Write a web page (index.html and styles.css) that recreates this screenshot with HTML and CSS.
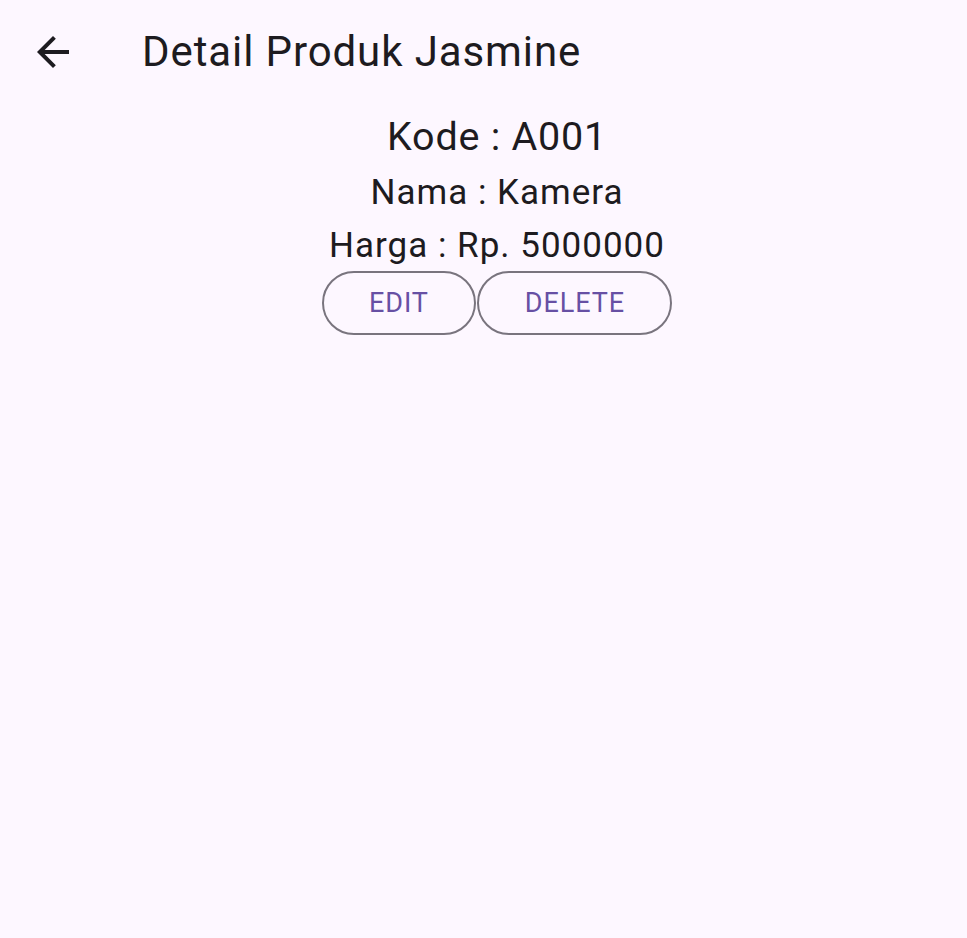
FILE: index.html
```html
<!DOCTYPE html>
<html>
<head>
<meta charset="utf-8">
<link rel="stylesheet" href="styles.css">
</head>
<body>
<header class="appbar">
  <button class="back" aria-label="Back">
    <svg viewBox="0 0 24 24" width="48" height="48"><path d="M20 11H7.83l5.59-5.59L12 4l-8 8 8 8 1.41-1.41L7.83 13H20v-2z" fill="#1d1b20"/></svg>
  </button>
  <h1 class="title">Detail Produk Jasmine</h1>
</header>
<main class="content">
  <div class="kode">Kode : A001</div>
  <div class="line">Nama : Kamera</div>
  <div class="line">Harga : Rp. 5000000</div>
  <div class="actions">
    <button class="outlined edit">EDIT</button>
    <button class="outlined">DELETE</button>
  </div>
</main>
</body>
</html>
```
FILE: styles.css
```css
html, body {
  margin: 0;
  padding: 0;
  background: #fdf7ff;
  color: #1d1b20;
  font-family: Roboto, "Noto Sans", sans-serif;
}
.appbar {
  height: 104px;
  display: flex;
  align-items: center;
}
.back {
  width: 48px;
  height: 48px;
  margin-left: 29px;
  padding: 0;
  border: none;
  background: none;
  display: flex;
}
.title {
  margin: 0 0 0 65px;
  font-size: 42px;
  font-weight: 400;
  letter-spacing: 0.9px;
  line-height: 48px;
}
.content {
  display: flex;
  flex-direction: column;
  align-items: center;
  padding-left: 27px;
  padding-top: 4px;
}
.kode {
  font-size: 39.5px;
  letter-spacing: 0.75px;
  line-height: 58px;
}
.line {
  font-size: 35px;
  letter-spacing: 1px;
  line-height: 53px;
}
.actions {
  display: flex;
  gap: 1px;
  margin-top: -1px;
}
.outlined {
  height: 64px;
  padding: 0 45.5px;
  border: 2px solid #79747e;
  border-radius: 32px;
  background: transparent;
  color: #6750a4;
  font-family: Roboto, sans-serif;
  font-size: 27px;
  font-weight: 400;
  letter-spacing: 0.9px;
}
```
